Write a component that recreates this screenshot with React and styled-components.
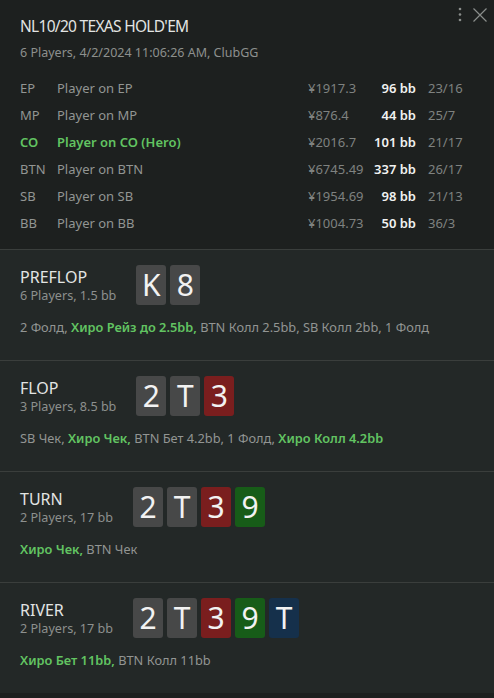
import React from 'react'
import styled, { createGlobalStyle } from 'styled-components'

const GlobalStyle = createGlobalStyle`
  html, body {
    margin: 0;
    padding: 0;
    background: #1d201f;
  }
  body {
    font-family: "Noto Sans", "Open Sans", sans-serif;
    -webkit-font-smoothing: antialiased;
  }
`

const players = [
  { pos: 'EP', name: 'Player on EP', stack: '¥1917.3', bb: '96 bb', ratio: '23/16' },
  { pos: 'MP', name: 'Player on MP', stack: '¥876.4', bb: '44 bb', ratio: '25/7' },
  { pos: 'CO', name: 'Player on CO (Hero)', stack: '¥2016.7', bb: '101 bb', ratio: '21/17', hero: true },
  { pos: 'BTN', name: 'Player on BTN', stack: '¥6745.49', bb: '337 bb', ratio: '26/17' },
  { pos: 'SB', name: 'Player on SB', stack: '¥1954.69', bb: '98 bb', ratio: '21/13' },
  { pos: 'BB', name: 'Player on BB', stack: '¥1004.73', bb: '50 bb', ratio: '36/3' },
]

const streets = [
  {
    name: 'PREFLOP',
    info: '6 Players, 1.5 bb',
    cards: [['K', 'gray'], ['8', 'gray']],
    actions: [['2 Фолд, '], ['Хиро Рейз до 2.5bb, ', true], ['BTN Колл 2.5bb, SB Колл 2bb, 1 Фолд']],
  },
  {
    name: 'FLOP',
    info: '3 Players, 8.5 bb',
    cards: [['2', 'gray'], ['T', 'gray'], ['3', 'red']],
    actions: [['SB Чек, '], ['Хиро Чек, ', true], ['BTN Бет 4.2bb, 1 Фолд, '], ['Хиро Колл 4.2bb', true]],
  },
  {
    name: 'TURN',
    info: '2 Players, 17 bb',
    cards: [['2', 'gray'], ['T', 'gray'], ['3', 'red'], ['9', 'green']],
    actions: [['Хиро Чек, ', true], ['BTN Чек']],
  },
  {
    name: 'RIVER',
    info: '2 Players, 17 bb',
    cards: [['2', 'gray'], ['T', 'gray'], ['3', 'red'], ['9', 'green'], ['T', 'blue']],
    actions: [['Хиро Бет 11bb, ', true], ['BTN Колл 11bb']],
  },
]

const suitColors = {
  gray: '#474848',
  red: '#7a1e1e',
  green: '#175c18',
  blue: '#15304b',
}

const Panel = styled.div`
  position: relative;
  width: 494px;
  min-height: 698px;
  background: #1d201f;
`

const Header = styled.header`
  padding: 14px 20px 13px;
`

const Title = styled.h1`
  margin: 0;
  font-size: 15.5px;
  letter-spacing: -0.7px;
  line-height: 24px;
  font-weight: 400;
  color: #e2e4e3;
`

const Subtitle = styled.div`
  margin-top: 6px;
  font-size: 12.5px;
  line-height: 18px;
  color: #8d908e;
`

const Controls = styled.div`
  position: absolute;
  top: 6px;
  right: 6px;
  display: flex;
  align-items: center;
  gap: 9px;
`

const IconButton = styled.button`
  border: 0;
  padding: 0;
  background: none;
  color: #8a8d8b;
  display: flex;
  cursor: pointer;
`

const PlayerTable = styled.div`
  margin-top: 12px;
  display: grid;
  grid-template-columns: 37px 1fr 65px 43px 58px;
  grid-auto-rows: 27px;
  align-items: center;
  font-size: 13px;
`

const Cell = styled.div`
  color: ${(p) => (p.$hero ? '#62c462' : p.$color || '#929593')};
  font-weight: ${(p) => (p.$hero || p.$bold ? 600 : 400)};
  text-align: ${(p) => p.$align || 'left'};
  padding-left: ${(p) => p.$pad || 0}px;
  white-space: nowrap;
`

const Street = styled.section`
  border-top: 1px solid #3a3e3c;
  background: #232827;
  padding: 15px 20px 24px;
`

const StreetTop = styled.div`
  display: flex;
  align-items: flex-end;
  gap: 20px;
`

const StreetLabel = styled.div`
  display: flex;
  flex-direction: column;
`

const StreetName = styled.div`
  font-size: 16px;
  line-height: 20px;
  color: #e2e4e3;
`

const StreetInfo = styled.div`
  font-size: 12.6px;
  line-height: 18px;
  color: #8d908e;
`

const Cards = styled.div`
  display: flex;
  gap: 4px;
`

const Card = styled.div`
  width: 30px;
  height: 40px;
  border-radius: 3px;
  background: ${(p) => suitColors[p.$suit]};
  color: #f2f2f2;
  font-size: 30px;
  line-height: 40px;
  text-align: center;
`

const Actions = styled.div`
  margin-top: 13px;
  font-size: 12.8px;
  line-height: 18px;
  color: #929593;
  white-space: nowrap;
`

const Hero = styled.span`
  color: #62c462;
  font-weight: 600;
`

export default function App() {
  return (
    <>
      <GlobalStyle />
      <Panel>
        <Controls>
          <IconButton aria-label="menu">
            <svg width="6" height="18" viewBox="0 0 6 18">
              <circle cx="3" cy="3" r="1.3" fill="currentColor" />
              <circle cx="3" cy="8.5" r="1.3" fill="currentColor" />
              <circle cx="3" cy="14" r="1.3" fill="currentColor" />
            </svg>
          </IconButton>
          <IconButton aria-label="close">
            <svg width="16" height="16" viewBox="0 0 16 16">
              <path d="M1.5 1.5 L14.5 14.5 M14.5 1.5 L1.5 14.5" stroke="currentColor" strokeWidth="1.2" />
            </svg>
          </IconButton>
        </Controls>
        <Header>
          <Title>NL10/20 TEXAS HOLD'EM</Title>
          <Subtitle>6 Players, 4/2/2024 11:06:26 AM, ClubGG</Subtitle>
          <PlayerTable>
            {players.map((p) => (
              <React.Fragment key={p.pos}>
                <Cell $hero={p.hero}>{p.pos}</Cell>
                <Cell $hero={p.hero}>{p.name}</Cell>
                <Cell $color="#7f8280">{p.stack}</Cell>
                <Cell $color="#f1f2f1" $bold $align="right">{p.bb}</Cell>
                <Cell $color="#7f8280" $pad={12}>{p.ratio}</Cell>
              </React.Fragment>
            ))}
          </PlayerTable>
        </Header>
        {streets.map((s) => (
          <Street key={s.name}>
            <StreetTop>
              <StreetLabel>
                <StreetName>{s.name}</StreetName>
                <StreetInfo>{s.info}</StreetInfo>
              </StreetLabel>
              <Cards>
                {s.cards.map(([rank, suit], i) => (
                  <Card key={i} $suit={suit}>{rank}</Card>
                ))}
              </Cards>
            </StreetTop>
            <Actions>
              {s.actions.map(([text, hero], i) =>
                hero ? <Hero key={i}>{text}</Hero> : <span key={i}>{text}</span>
              )}
            </Actions>
          </Street>
        ))}
      </Panel>
    </>
  )
}
